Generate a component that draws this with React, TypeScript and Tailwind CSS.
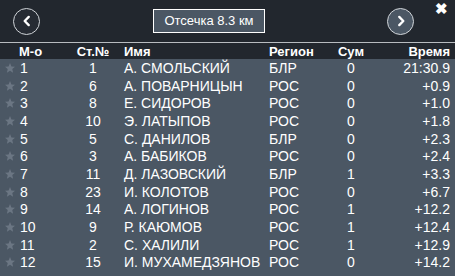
const rows: [number, number, string, string, number, string][] = [
  [1, 1, "А. СМОЛЬСКИЙ", "БЛР", 0, "21:30.9"],
  [2, 6, "А. ПОВАРНИЦЫН", "РОС", 0, "+0.9"],
  [3, 8, "Е. СИДОРОВ", "РОС", 0, "+1.0"],
  [4, 10, "Э. ЛАТЫПОВ", "РОС", 0, "+1.8"],
  [5, 5, "С. ДАНИЛОВ", "БЛР", 0, "+2.3"],
  [6, 3, "А. БАБИКОВ", "РОС", 0, "+2.4"],
  [7, 11, "Д. ЛАЗОВСКИЙ", "БЛР", 1, "+3.3"],
  [8, 23, "И. КОЛОТОВ", "РОС", 0, "+6.7"],
  [9, 14, "А. ЛОГИНОВ", "РОС", 1, "+12.2"],
  [10, 9, "Р. КАЮМОВ", "РОС", 1, "+12.4"],
  [11, 2, "С. ХАЛИЛИ", "РОС", 1, "+12.9"],
  [12, 15, "И. МУХАМЕДЗЯНОВ", "РОС", 0, "+14.2"],
];

const cols = "grid grid-cols-[70px_46px_153px_61px_42px_1fr] items-center";

function Chevron({ dir }: { dir: "left" | "right" }) {
  return (
    <svg viewBox="0 0 24 24" className="w-[14px] h-[14px]" fill="none" stroke="white" strokeWidth="4" strokeLinecap="round" strokeLinejoin="round">
      {dir === "left" ? <path d="M15 5l-7 7 7 7" /> : <path d="M9 5l7 7-7 7" />}
    </svg>
  );
}

function Star() {
  return (
    <svg viewBox="0 0 24 24" className="w-[12px] h-[12px]" fill="#6b7683">
      <path d="M12 2l2.9 6.9 7.1.6-5.4 4.7 1.6 7.1L12 17.5 5.8 21.3l1.6-7.1L2 9.5l7.1-.6z" />
    </svg>
  );
}

export default function App() {
  return (
    <div className="w-[455px] h-[276px] bg-[#4b5764] text-white font-['Liberation_Sans',Arial,sans-serif] overflow-hidden">
      {/* Top bar */}
      <div className="relative h-[42px] bg-[#22272e] flex items-center pl-[13px]">
        <button className="w-[27px] h-[27px] rounded-full border-[1.5px] border-[#d0d4d8] bg-[#262b33] flex items-center justify-center">
          <Chevron dir="left" />
        </button>
        <div className="ml-[113px] w-[112px] h-[24px] border border-white bg-[#4b5764] flex items-center justify-center text-[13px]">
          Отсечка 8.3 км
        </div>
        <button className="ml-[122px] w-[27px] h-[27px] rounded-full border-[1.5px] border-[#d0d4d8] bg-[#4b5764] flex items-center justify-center">
          <Chevron dir="right" />
        </button>
        <span className="absolute right-[7px] top-[1px] text-[15px] font-bold leading-none">✖</span>
      </div>
      <div className="h-px bg-[#b8bcc0]" />

      {/* Column headers */}
      <div className={`${cols} h-[16px] bg-[#22272e] text-[13px] font-bold leading-none pr-[5px]`}>
        <span className="pl-[19px]">М-о</span>
        <span className="text-center">Ст.№</span>
        <span className="pl-[8px]">Имя</span>
        <span>Регион</span>
        <span className="text-center">Сум</span>
        <span className="text-right">Время</span>
      </div>

      {/* Rows */}
      {rows.map(([pos, bib, name, region, sum, time]) => (
        <div key={pos} className={`${cols} h-[17.7px] text-[14px] leading-none pr-[5px]`}>
          <span className="flex items-center pl-[4px] gap-[4px]">
            <Star />
            {pos}
          </span>
          <span className="text-center">{bib}</span>
          <span className="pl-[8px] whitespace-nowrap">{name}</span>
          <span>{region}</span>
          <span className="text-center">{sum}</span>
          <span className="text-right">{time}</span>
        </div>
      ))}
    </div>
  );
}
